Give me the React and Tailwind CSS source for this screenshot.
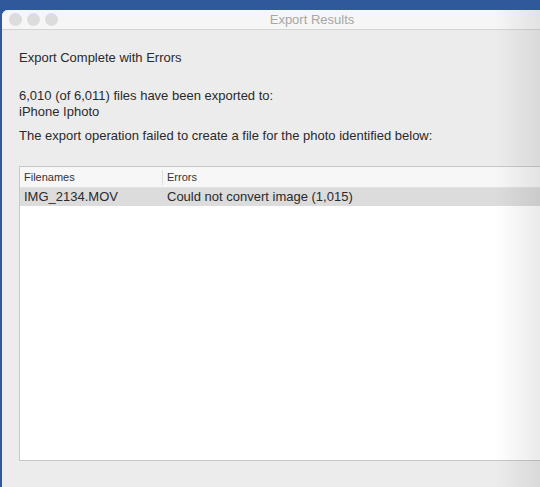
export default function App() {
  return (
    <div className="relative h-[487px] w-[540px] overflow-hidden bg-[#30599b] pt-[10px] pl-[2px] font-['Liberation_Sans',Arial,sans-serif]">
      <div className="flex h-full w-[620px] flex-col overflow-hidden rounded-tl-[6px] bg-[#ececec]">
        {/* Title bar */}
        <div className="relative flex h-[20px] shrink-0 items-center border-b border-[#d4d4d4] bg-[#f6f6f6] px-[7px]">
          <div className="flex gap-[5px]">
            <span className="h-[13px] w-[13px] rounded-full bg-[#dcdcdc]" />
            <span className="h-[13px] w-[13px] rounded-full bg-[#dcdcdc]" />
            <span className="h-[13px] w-[13px] rounded-full bg-[#dcdcdc]" />
          </div>
          <div className="absolute inset-0 flex items-center justify-center text-[13px] text-[#a6a6a6]">
            Export Results
          </div>
        </div>

        {/* Body */}
        <div className="flex flex-1 flex-col px-[17px] pt-[20px] pb-[26px] text-[13px] leading-[16px] text-[#2a2a2a]">
          <p>Export Complete with Errors</p>
          <p className="mt-[22px]">6,010 (of 6,011) files have been exported to:</p>
          <p>iPhone Iphoto</p>
          <p className="mt-[8px]">
            The export operation failed to create a file for the photo identified below:
          </p>

          <div className="mt-[22px] flex flex-1 flex-col border border-[#c8c8c8] bg-white">
            <div className="flex h-[21px] items-center border-b border-[#e2e2e2] bg-[#f7f7f7] text-[11px] text-[#333]">
              <div className="w-[143px] border-r border-[#dedede] pl-[4px] leading-[15px]">Filenames</div>
              <div className="pl-[4px]">Errors</div>
            </div>
            <div className="flex h-[18px] items-center bg-[#dcdcdc] text-[13px]">
              <div className="w-[143px] pl-[4px]">IMG_2134.MOV</div>
              <div className="pl-[4px]">Could not convert image (1,015)</div>
            </div>
          </div>
        </div>
      </div>
      <div className="pointer-events-none absolute top-[10px] right-0 bottom-0 w-[45px] bg-gradient-to-r from-transparent to-black/[0.08]" />
    </div>
  );
}
